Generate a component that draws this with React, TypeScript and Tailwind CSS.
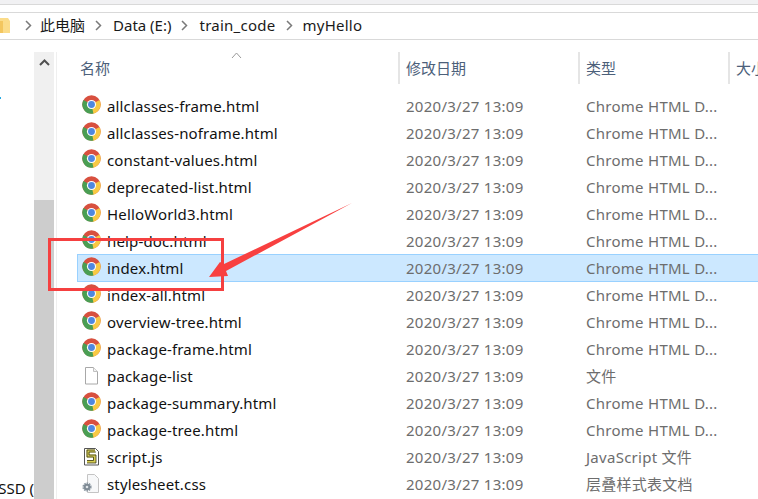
const sans = 'font-["Noto_Sans","Noto_Sans_CJK_SC",sans-serif]'

const files = [
  ['allclasses-frame.html', 'chrome'],
  ['allclasses-noframe.html', 'chrome'],
  ['constant-values.html', 'chrome'],
  ['deprecated-list.html', 'chrome'],
  ['HelloWorld3.html', 'chrome'],
  ['help-doc.html', 'chrome'],
  ['index.html', 'chrome'],
  ['index-all.html', 'chrome'],
  ['overview-tree.html', 'chrome'],
  ['package-frame.html', 'chrome'],
  ['package-list', 'file'],
  ['package-summary.html', 'chrome'],
  ['package-tree.html', 'chrome'],
  ['script.js', 'script'],
  ['stylesheet.css', 'css'],
]

function typeOf(kind: string) {
  if (kind === 'file') return '文件'
  if (kind === 'script') return 'JavaScript 文件'
  if (kind === 'css') return '层叠样式表文档'
  return 'Chrome HTML D...'
}

function ChromeIcon() {
  return (
    <svg width="19" height="19" viewBox="0 0 20 20" className="mb-[4px] shrink-0">
      <circle cx="10" cy="10" r="9.7" fill="#d8503f" />
      <path d="M10 10 L18.4 5.2 A9.7 9.7 0 0 1 10 19.7 Z" fill="#f8c944" />
      <path d="M10 10 L12 19.5 A9.7 9.7 0 0 1 1.600 5.200 Z" fill="#4a9e53" />
      <circle cx="10" cy="10" r="4.800" fill="#fff" />
      <circle cx="10" cy="10" r="3.600" fill="#4f88e0" />
    </svg>
  )
}

function FileIcon() {
  return (
    <svg width="19" height="19" viewBox="0 0 19 19" className="mb-[2px] shrink-0">
      <path d="M3.500 1.500h8l4 4v12.500h-12z" fill="#fff" stroke="#a8a8a8" />
      <path d="M11.500 1.500v4h4" fill="#f2f2f2" stroke="#c0c0c0" />
    </svg>
  )
}

function ScriptIcon() {
  return (
    <svg width="19" height="19" viewBox="0 0 19 19" className="mb-[2px] shrink-0">
      <path d="M2.500 1.500h11l3 3v13.500h-14z" fill="#fff" stroke="#555" />
      <path d="M13 4 H6 V9 H12.500 V14.500 H5" fill="none" stroke="#d6cc52" strokeWidth="3" />
      <path d="M13 3 H5 V10 H11.500 V13.500 H5 M14 5 H7 V8 H14 V16 H5" fill="none" stroke="#3a3a1a" strokeWidth="0.800" />
    </svg>
  )
}

function CssIcon() {
  return (
    <svg width="19" height="19" viewBox="0 0 19 19" className="mb-[2px] shrink-0">
      <path d="M5.500 0.500h7l4 4v14h-11z" fill="#f7f8f9" stroke="#c4c4c4" />
      <circle cx="5" cy="13" r="3.600" fill="none" stroke="#8d99a3" strokeWidth="2" strokeDasharray="1.500 0.800" />
      <circle cx="5" cy="13" r="3.200" fill="#7e8a94" />
      <circle cx="5" cy="13" r="1.300" fill="#dfe4e8" />
    </svg>
  )
}

function RowIcon({ kind }: { kind: string }) {
  if (kind === 'file') return <FileIcon />
  if (kind === 'script') return <ScriptIcon />
  if (kind === 'css') return <CssIcon />
  return <ChromeIcon />
}

function Chevron() {
  return (
    <svg width="7" height="11" viewBox="0 0 7 11" className="shrink-0">
      <path d="M1 1l4.500 4.500L1 10" fill="none" stroke="#7a7a7a" strokeWidth="1.500" />
    </svg>
  )
}

function Row({ name, kind }: { name: string; kind: string }) {
  const selected = name === 'index.html'
  return (
    <div
      className={`flex items-center text-[15px] ${
        selected ? '-mt-px h-[28px] bg-[#cce8ff] shadow-[inset_0_0_0_1px_#99d1ff]' : 'h-[27px]'
      }`}
    >
      <div className="flex w-[321px] shrink-0 items-center gap-[6px] pl-[5px]">
        <RowIcon kind={kind} />
        <span className="tracking-[0.15px] text-[#111]">{name}</span>
      </div>
      <div className="w-[180px] shrink-0 pl-[8px] tracking-[0.27px] text-[#6d6d6d]">2020/3/27 13:09</div>
      <div className="pl-[8px] tracking-[0.27px] text-[#6d6d6d]">{typeOf(kind)}</div>
    </div>
  )
}

function Header({ label, width }: { label: string; width: string }) {
  return (
    <div className={`flex h-[32px] shrink-0 items-center border-l-2 border-[#e5e5e5] pl-[6px] text-[#4c607a] ${width}`}>
      {label}
    </div>
  )
}

export default function App() {
  return (
    <div className={`relative h-[499px] w-[758px] overflow-hidden bg-white text-[15px] ${sans}`}>
      <div className="h-[5px] border-b border-[#d9d9d9] bg-[#f1f1f3]" />
      <div className="h-[7px]" />
      <div className="flex h-[28px] items-center border-y border-[#d9d9d9] pb-px text-[#1a1a1a]">
        <svg width="11" height="16" viewBox="0 0 11 16" className="shrink-0">
          <path d="M0 0h8l2 3v12H0z" fill="#fbdc8a" />
          <path d="M0 3h3v12H0z" fill="#f3c65f" />
        </svg>
        <div className="ml-[14px] flex items-center">
          <Chevron />
          <span className="ml-[8px]">此电脑</span>
          <span className="ml-[10px]"><Chevron /></span>
          <span className="ml-[11px]">Data (E:)</span>
          <span className="ml-[10px]"><Chevron /></span>
          <span className="ml-[11px] tracking-[0.25px]">train_code</span>
          <span className="ml-[11px]"><Chevron /></span>
          <span className="ml-[9px] tracking-[0.25px]">myHello</span>
        </div>
      </div>

      <div className="flex h-[459px]">
        <div className="relative w-[34px] shrink-0 overflow-hidden">
          <div className="absolute left-0 top-[57px] h-[2px] w-[1px] bg-[#27a9e3]" />
          <div className="absolute right-0 top-[437px] whitespace-nowrap text-[#111]">SSD (</div>
        </div>
        <div className="mt-[12px] flex w-[20px] shrink-0 flex-col bg-[#f0f0f0]">
          <div className="flex h-[148px] justify-center pt-[7px]">
            <svg width="11" height="7" viewBox="0 0 11 7">
              <path d="M1 6l4.500-4.500L10 6" fill="none" stroke="#505050" strokeWidth="2" />
            </svg>
          </div>
          <div className="flex-1 bg-[#cdcdcd]" />
        </div>
        <div className="ml-[2px] mt-[12px] w-px shrink-0 bg-[#efefef]" />
        <div className="min-w-0 flex-1 overflow-hidden pl-[20px]">
          <div className="relative flex h-[53px] items-end pb-[9px]">
            <svg width="11" height="7" viewBox="0 0 11 7" className="absolute left-[154px] top-[12px]">
              <path d="M1 6l4.500-5L10 6" fill="none" stroke="#9a9a9a" />
            </svg>
            <div className="flex h-[32px] w-[321px] shrink-0 items-center pl-[3px] text-[#4c607a]">名称</div>
            <Header label="修改日期" width="w-[180px]" />
            <Header label="类型" width="w-[150px]" />
            <Header label="大小" width="w-[40px]" />
          </div>
          <div className="w-[700px]">
            {files.map(([name, kind]) => (
              <Row key={name} name={name} kind={kind} />
            ))}
          </div>
        </div>
      </div>

      <div className="absolute left-[48px] top-[238px] h-[53px] w-[176px] border-[3px] border-[#f54040]" />
      <svg width="758" height="499" viewBox="0 0 758 499" className="absolute left-0 top-0">
        <polygon points="352,203 224,264 220,262 209,277 228,276 226,271" fill="#f84040" />
      </svg>
    </div>
  )
}
